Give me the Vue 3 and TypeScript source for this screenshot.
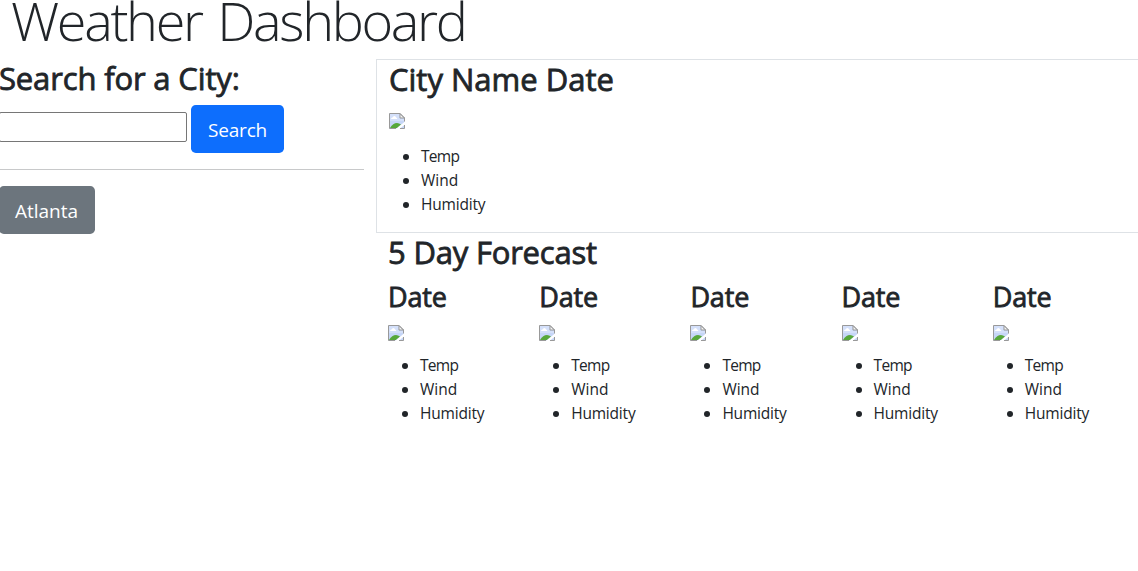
<script setup lang="ts">
import { defineComponent, h } from 'vue'

const readings: string[] = ['Temp', 'Wind', 'Humidity']
const days: number[] = [1, 2, 3, 4, 5]

// Placeholder for a weather picture that is not available
const MissingImage = defineComponent({
  render() {
    return h('svg', { width: 16, height: 16, viewBox: '0 0 16 16' }, [
      h('path', { d: 'M.5 .5H11L15.5 5V15.5H.5Z', fill: '#c6d6f7' }),
      h('path', { d: 'M1 1H10.5V6H15V8H1Z', fill: '#d4e0fa' }),
      h('path', { d: 'M2 6Q2 4.5 3.5 4.5Q4 3 5.5 3Q6.8 3 7.1 4.5Q8.3 4.5 8.3 6Z', fill: '#fff' }),
      h('path', { d: 'M1 15Q4 10 8 10Q10 10 12 11.5L8 15Z', fill: '#57a83b' }),
      h('path', { d: 'M16 8.5L7 16H10.5L16 11.5Z', fill: '#fff' }),
      h('path', { d: 'M11 .5V5H15.5Z', fill: '#f4f4f4', stroke: '#999' }),
      h('path', { d: 'M7 15.5H.5V.5H11L15.5 5V8.5M15.5 12V15.5H11', fill: 'none', stroke: '#999' }),
    ])
  },
})
</script>

<template>
  <div class="page">
    <header><h1>Weather Dashboard</h1></header>
    <div class="columns">
      <aside>
        <h2 class="search-title">Search for a City:</h2>
        <div class="search">
          <input type="text" aria-label="City" />
          <button class="btn primary" type="button"><span>Search</span></button>
        </div>
        <hr />
        <button class="btn secondary" type="button"><span>Atlanta</span></button>
      </aside>
      <main>
        <section class="current">
          <h2 class="city-title">City Name Date</h2>
          <MissingImage class="picture" />
          <ul>
            <li v-for="r in readings" :key="r"><span :class="r.toLowerCase()">{{ r }}</span></li>
          </ul>
        </section>
        <section class="forecast">
          <h2 class="forecast-title">5 Day Forecast</h2>
          <div class="days">
            <article v-for="d in days" :key="d">
              <h3>Date</h3>
              <MissingImage class="picture" />
              <ul>
                <li v-for="r in readings" :key="r"><span :class="r.toLowerCase()">{{ r }}</span></li>
              </ul>
            </article>
          </div>
        </section>
      </main>
    </div>
  </div>
</template>

<style>
body {
  margin: 0;
  background: #fff;
  overflow: hidden;
}
</style>

<style scoped>
.page {
  height: 571px;
  overflow: hidden;
  color: #212529;
  font: 400 16px/24px "Open Sans", "Noto Sans", sans-serif;
}
* {
  box-sizing: border-box;
}
header {
  height: 59px;
  padding-left: 11px;
}
h1 {
  margin: 0;
  font-size: 54px;
  line-height: 40px;
  font-weight: 300;
  letter-spacing: -2.35px;
  word-spacing: 4px;
  white-space: nowrap;
}
.columns {
  display: grid;
  grid-template-columns: 365px 774px;
  column-gap: 12px;
  margin-left: -1px;
}
h2,
h3 {
  font-weight: 500;
  -webkit-text-stroke: 0.8px #212529;
}
h2 {
  margin: 0 0 8px;
  font-size: 31px;
  line-height: 38.4px;
  white-space: nowrap;
}
.search-title {
  letter-spacing: -0.15px;
}
.city-title {
  letter-spacing: 0;
}
.forecast-title {
  letter-spacing: -0.2px;
}
.search {
  display: flex;
  align-items: center;
  gap: 4px;
  height: 48px;
}
input {
  width: 188px;
  height: 30px;
  margin: 0 0 4px;
  border: 1px solid #767676;
  border-radius: 2px;
  background: #fff;
}
.btn {
  height: 48px;
  padding: 0;
  border: 0;
  border-radius: 4.8px;
  color: #fff;
  font: 400 19px/50px "Open Sans", "Noto Sans", sans-serif;
}
.primary {
  width: 93px;
  background: #0d6efd;
  letter-spacing: -0.2px;
}
.secondary {
  width: 96px;
  padding-right: 1px;
  background: #6c757d;
}
hr {
  height: 1px;
  margin: 16px 0;
  border: 0;
  background: #c8c9ca;
}
.current {
  height: 174px;
  padding-left: 12px;
  border: 1px solid #dee2e6;
  border-right: 0;
}
.picture {
  display: block;
}
.current .picture {
  margin: 15px 0;
}
.current h2 {
  margin-bottom: 0;
}
ul {
  margin: 0;
  padding-left: 32px;
}
li {
  height: 24px;
}
li span {
  font-size: 15.5px;
}
.temp {
  letter-spacing: -0.7px;
}
.humidity {
  letter-spacing: -0.2px;
}
.forecast {
  padding-left: 12px;
}
.days {
  display: grid;
  grid-template-columns: repeat(5, 151.2px);
}
h3 {
  margin: 0;
  padding-top: 1px;
  font-size: 27px;
  line-height: 33.6px;
  letter-spacing: -0.15px;
}
.days .picture {
  margin: 11px 0 12px;
}
</style>
